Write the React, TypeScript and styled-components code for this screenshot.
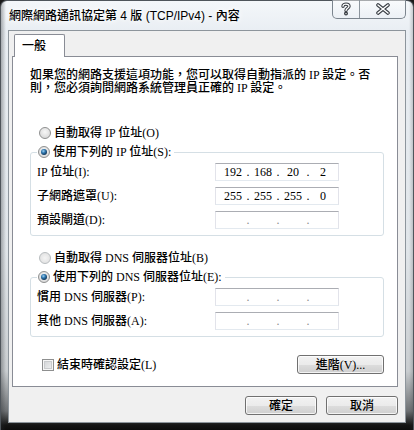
import React from 'react';
import styled, { createGlobalStyle } from 'styled-components';

const GlobalStyle = createGlobalStyle`
  html, body { margin: 0; padding: 0; background: #1a1a1a; }
  body { width: 414px; height: 430px; overflow: hidden; }
  * { box-sizing: border-box; }
`;

const UI_FONT = `"Liberation Serif", "Noto Sans CJK TC", serif`;
const TITLE_FONT = `"Liberation Sans", "Noto Sans CJK TC", sans-serif`;

const Window = styled.div`
  width: 414px;
  height: 430px;
  display: flex;
  flex-direction: column;
  padding: 0 7px 7px 7px;
  border: 1px solid #4f555b;
  border-bottom: none;
  border-radius: 7px 7px 0 0;
  background:
    linear-gradient(to right, rgba(40, 44, 48, 0.35) 0, rgba(40, 44, 48, 0) 5px, rgba(40, 44, 48, 0) 408px, rgba(40, 44, 48, 0.3) 414px),
    linear-gradient(to bottom, #f4f7fa 0, #e9eef3 30px, #e0e5e9 250px, #c9cdd0 370px, #6d7073 410px, #151515 424px, #0b0b0b 430px);
`;

const TitleBar = styled.div`
  height: 29px;
  display: flex;
  align-items: flex-start;
`;

const Title = styled.div`
  margin-top: 8px;
  padding-left: 1px;
  font-family: ${TITLE_FONT};
  font-size: 12px;
  font-weight: 500;
  line-height: 15px;
  color: #000;
  white-space: nowrap;
  text-shadow: 0 0 5px #fff, 0 0 8px #fff;
`;

const Caption = styled.div`
  margin-left: auto;
  margin-top: -1px;
  display: flex;
  height: 19px;
  border: 1px solid #7c858e;
  border-top: none;
  border-radius: 0 0 5px 5px;
  background: linear-gradient(to bottom, rgba(255, 255, 255, 0.5), rgba(235, 240, 245, 0.6));
  overflow: hidden;
`;

const CaptionButton = styled.div<{ $w: number }>`
  width: ${(p) => p.$w}px;
  height: 100%;
  display: flex;
  align-items: center;
  justify-content: center;
  & + & {
    border-left: 1px solid #8b949c;
  }
`;

const Client = styled.div`
  flex: 1;
  display: flex;
  flex-direction: column;
  background: #f0f0f0;
  border: 1px solid #8d959c;
  padding: 3px 7px 0 3px;
`;

const TabStrip = styled.div`
  height: 22px;
  display: flex;
  align-items: flex-end;
  padding-left: 2px;
  position: relative;
  z-index: 1;
`;

const Tab = styled.div`
  width: 51px;
  height: 23px;
  margin-bottom: -1px;
  background: #fff;
  border: 1px solid #898c95;
  border-bottom: none;
  border-radius: 2px 2px 0 0;
  padding: 3px 0 0 7px;
  font-family: ${UI_FONT};
  font-size: 12px;
  font-weight: 500;
  line-height: 16px;
  color: #000;
`;

const Panel = styled.div`
  display: flex;
  flex-direction: column;
  background: #fff;
  border: 1px solid #898c95;
  padding: 12px 13px 12px 17px;
  font-family: ${UI_FONT};
  font-size: 12px;
  font-weight: 500;
  color: #000;
`;

const Description = styled.p`
  margin: 0;
  line-height: 13px;
  white-space: nowrap;
`;

const RadioRow = styled.label<{ $top: number }>`
  display: flex;
  align-items: center;
  gap: 3px;
  height: 16px;
  line-height: 16px;
  margin-top: ${(p) => p.$top}px;
  margin-left: 9px;
  white-space: nowrap;
`;

const RadioDot = styled.span<{ $checked?: boolean; $dim?: boolean }>`
  position: relative;
  width: 12px;
  height: 12px;
  flex: none;
  border-radius: 50%;
  border: 1px solid ${(p) => (p.$dim ? '#b8bcbf' : '#8e8f8f')};
  background: ${(p) =>
    p.$dim
      ? 'radial-gradient(circle at 50% 50%, #f4f4f4 0, #e6e6e6 60%, #dcdcdc 100%)'
      : 'radial-gradient(circle at 50% 40%, #f7f7f7 0, #e2e2e2 55%, #cfd0d1 100%)'};
  &::after {
    content: '';
    display: ${(p) => (p.$checked ? 'block' : 'none')};
    position: absolute;
    left: 2px;
    top: 2px;
    width: 6px;
    height: 6px;
    border-radius: 50%;
    background: radial-gradient(circle at 40% 35%, #9fd0f0 0, #2f78b0 35%, #123a5e 70%, #0a1e30 100%);
  }
`;

const Group = styled.fieldset`
  margin: 3px 0 0 0;
  padding: 0 44px 6px 6px;
  border: 1px solid #d5dfe5;
  border-radius: 3px;
  min-width: 0;
`;

const GroupLegend = styled.legend`
  padding: 0 3px 0 1px;
  margin: 0;
  height: 16px;
  display: flex;
  align-items: center;
  gap: 3px;
  line-height: 16px;
  white-space: nowrap;
`;

const FieldRow = styled.div`
  display: flex;
  align-items: center;
  height: 18px;
  margin-top: 6px;
  &:first-of-type {
    margin-top: 3px;
  }
`;

const FieldLabel = styled.span`
  flex: 1;
  white-space: nowrap;
  line-height: 18px;
`;

const IpBox = styled.div`
  width: 124px;
  height: 18px;
  flex: none;
  display: flex;
  align-items: center;
  padding-left: 5px;
  background: #fff;
  border: 1px solid #e2e3ea;
  border-top-color: #abadb3;
  border-bottom-color: #e3e9ef;
  font-family: "Liberation Serif", serif;
  font-size: 12px;
  line-height: 16px;
`;

const IpSeg = styled.span`
  width: 24px;
  text-align: center;
`;

const IpDot = styled.span<{ $empty?: boolean }>`
  width: 6px;
  text-align: center;
  color: ${(p) => (p.$empty ? '#8a8a8a' : '#000')};
`;

const Footer = styled.div`
  display: flex;
  align-items: center;
  margin-top: 18px;
  height: 19px;
`;

const CheckRow = styled.label`
  display: flex;
  align-items: center;
  gap: 3px;
  margin-left: 12px;
  white-space: nowrap;
  line-height: 16px;
`;

const CheckBox = styled.span`
  width: 12px;
  height: 12px;
  flex: none;
  border: 1px solid #8e8f8f;
  background: #f4f4f4;
  box-shadow: inset 0 0 0 1px #f6f6f6, inset 0 0 0 2px #c9cbcd;
  background-image: linear-gradient(135deg, #cfd1d3, #f2f3f4);
`;

const Button = styled.button<{ $w: number }>`
  width: ${(p) => p.$w}px;
  height: 19px;
  padding: 0;
  border: 1px solid #707070;
  border-radius: 3px;
  background: linear-gradient(to bottom, #f2f2f2 0, #ebebeb 50%, #dddddd 51%, #cfcfcf 100%);
  box-shadow: inset 0 0 0 1px rgba(255, 255, 255, 0.75);
  font-family: ${UI_FONT};
  font-size: 12px;
  font-weight: 500;
  line-height: 16px;
  color: #000;
  cursor: default;
`;

const AdvancedButton = styled(Button)`
  margin-left: auto;
`;

const ButtonBar = styled.div`
  display: flex;
  justify-content: flex-end;
  gap: 9px;
  margin-top: 9px;
`;

const HelpIcon = () => (
  <svg width="10" height="14" viewBox="0 0 10 14">
    <g fill="none" strokeLinecap="round" strokeLinejoin="round">
      <path d="M2 4.2 C2 1.4 8 1.4 8 4.2 C8 6.4 5 6.2 5 8.6" stroke="#3a3f45" strokeWidth="3.4" />
      <circle cx="5" cy="11.6" r="1.2" fill="#3a3f45" stroke="#3a3f45" strokeWidth="1.6" />
      <path d="M2 4.2 C2 1.4 8 1.4 8 4.2 C8 6.4 5 6.2 5 8.6" stroke="#fff" strokeWidth="1.3" />
      <circle cx="5" cy="11.6" r="0.7" fill="#fff" />
    </g>
  </svg>
);

const CloseIcon = () => (
  <svg width="14" height="12" viewBox="0 0 14 12">
    <g fill="none" strokeLinecap="round">
      <path d="M2 2 L12 10 M12 2 L2 10" stroke="#3a3f45" strokeWidth="3.6" />
      <path d="M2 2 L12 10 M12 2 L2 10" stroke="#fff" strokeWidth="1.5" />
    </g>
  </svg>
);

const IpField = ({ parts }: { parts?: string[] }) => {
  const empty = !parts;
  const segs = parts ?? ['', '', '', ''];
  return (
    <IpBox>
      {segs.map((s, i) => (
        <React.Fragment key={i}>
          <IpSeg>{s}</IpSeg>
          {i < 3 && <IpDot $empty={empty}>.</IpDot>}
        </React.Fragment>
      ))}
    </IpBox>
  );
};

export default function App() {
  return (
    <>
      <GlobalStyle />
      <Window>
        <TitleBar>
          <Title>網際網路通訊協定第 4 版 (TCP/IPv4) - 內容</Title>
          <Caption>
            <CaptionButton $w={26}>
              <HelpIcon />
            </CaptionButton>
            <CaptionButton $w={46}>
              <CloseIcon />
            </CaptionButton>
          </Caption>
        </TitleBar>
        <Client>
          <TabStrip>
            <Tab>一般</Tab>
          </TabStrip>
          <Panel>
            <Description>
              如果您的網路支援這項功能，您可以取得自動指派的 IP 設定。否
              <br />
              則，您必須詢問網路系統管理員正確的 IP 設定。
            </Description>

            <RadioRow $top={30}>
              <RadioDot />
              自動取得 IP 位址(O)
            </RadioRow>

            <Group>
              <GroupLegend>
                <RadioDot $checked />
                使用下列的 IP 位址(S):
              </GroupLegend>
              <FieldRow>
                <FieldLabel>IP 位址(I):</FieldLabel>
                <IpField parts={['192', '168', '20', '2']} />
              </FieldRow>
              <FieldRow>
                <FieldLabel>子網路遮罩(U):</FieldLabel>
                <IpField parts={['255', '255', '255', '0']} />
              </FieldRow>
              <FieldRow>
                <FieldLabel>預設閘道(D):</FieldLabel>
                <IpField />
              </FieldRow>
            </Group>

            <RadioRow $top={14}>
              <RadioDot $dim />
              自動取得 DNS 伺服器位址(B)
            </RadioRow>

            <Group>
              <GroupLegend>
                <RadioDot $checked />
                使用下列的 DNS 伺服器位址(E):
              </GroupLegend>
              <FieldRow>
                <FieldLabel>慣用 DNS 伺服器(P):</FieldLabel>
                <IpField />
              </FieldRow>
              <FieldRow>
                <FieldLabel>其他 DNS 伺服器(A):</FieldLabel>
                <IpField />
              </FieldRow>
            </Group>

            <Footer>
              <CheckRow>
                <CheckBox />
                結束時確認設定(L)
              </CheckRow>
              <AdvancedButton $w={87}>進階(V)...</AdvancedButton>
            </Footer>
          </Panel>
          <ButtonBar>
            <Button $w={72}>確定</Button>
            <Button $w={72}>取消</Button>
          </ButtonBar>
        </Client>
      </Window>
    </>
  );
}
